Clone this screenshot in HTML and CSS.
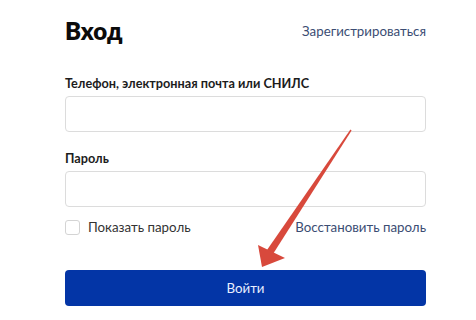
FILE: index.html
```html
<!DOCTYPE html>
<html lang="ru">

<head>
    <meta charset="UTF-8">
    <meta name="viewport" content="width=device-width, initial-scale=1.0">
    <title>Вход</title>
    <link rel="stylesheet" href="styles.css">
</head>

<body>
    <div class="login">
        <div class="login-head">
            <h1 class="title">Вход</h1>
            <a class="link" href="#">Зарегистрироваться</a>
        </div>

        <label class="field-label" for="login">Телефон, электронная почта или СНИЛС</label>
        <input class="field" id="login" type="text">

        <label class="field-label second" for="password">Пароль</label>
        <input class="field" id="password" type="password">

        <div class="options">
            <label class="show-pass">
                <span class="check"></span>
                Показать пароль
            </label>
            <a class="link" href="#">Восстановить пароль</a>
        </div>

        <button class="btn" type="button">Войти</button>
    </div>

    <!-- red pointer drawn over the form -->
    <svg class="arrow" width="476" height="320" viewBox="0 0 476 320">
        <polygon points="350.4,129.6 351.6,130.4 273,254 267,250" fill="#d8493c" />
        <polygon points="258,245 285,258 262,267" fill="#d8493c" />
    </svg>
</body>

</html>
```

FILE: styles.css
```css
body {
    margin: 0;
    background: #fff;
    font-family: "Lato", "Liberation Sans", sans-serif;
    color: #222;
}

.login {
    width: 361px;
    margin-left: 65px;
    padding-top: 17px;
    display: flex;
    flex-direction: column;
}

.login-head {
    height: 28px;
    display: flex;
    align-items: center;
    justify-content: space-between;
}

.title {
    margin: 0;
    font-size: 24px;
    line-height: 28px;
    font-weight: 800;
    color: #0b0b0b;
}

.link {
    font-size: 13.3px;
    line-height: 18px;
    color: #3b4d73;
    text-decoration: none;
}

.field-label {
    margin-top: 29px;
    margin-bottom: 4px;
    font-size: 12.7px;
    line-height: 18px;
    font-weight: 700;
    color: #1c1c1c;
}

.field-label.second {
    margin-top: 17px;
}

.field {
    box-sizing: border-box;
    height: 36px;
    border: 1px solid #dcdcdc;
    border-radius: 4px;
    background: #fff;
}

.options {
    margin-top: 11px;
    height: 18px;
    display: flex;
    align-items: center;
    justify-content: space-between;
}

.show-pass {
    display: flex;
    align-items: center;
    gap: 8px;
    font-size: 13.3px;
    line-height: 18px;
    color: #333;
}

.check {
    box-sizing: border-box;
    width: 15px;
    height: 15px;
    border: 1px solid #d4d4d4;
    border-radius: 3px;
}

.btn {
    margin-top: 34px;
    height: 36px;
    border: none;
    border-radius: 4px;
    background: #0335a6;
    color: #e8eeff;
    font-family: inherit;
    font-size: 13.3px;
    font-weight: 400;
}

.arrow {
    position: absolute;
    top: 0;
    left: 0;
    pointer-events: none;
}
```
